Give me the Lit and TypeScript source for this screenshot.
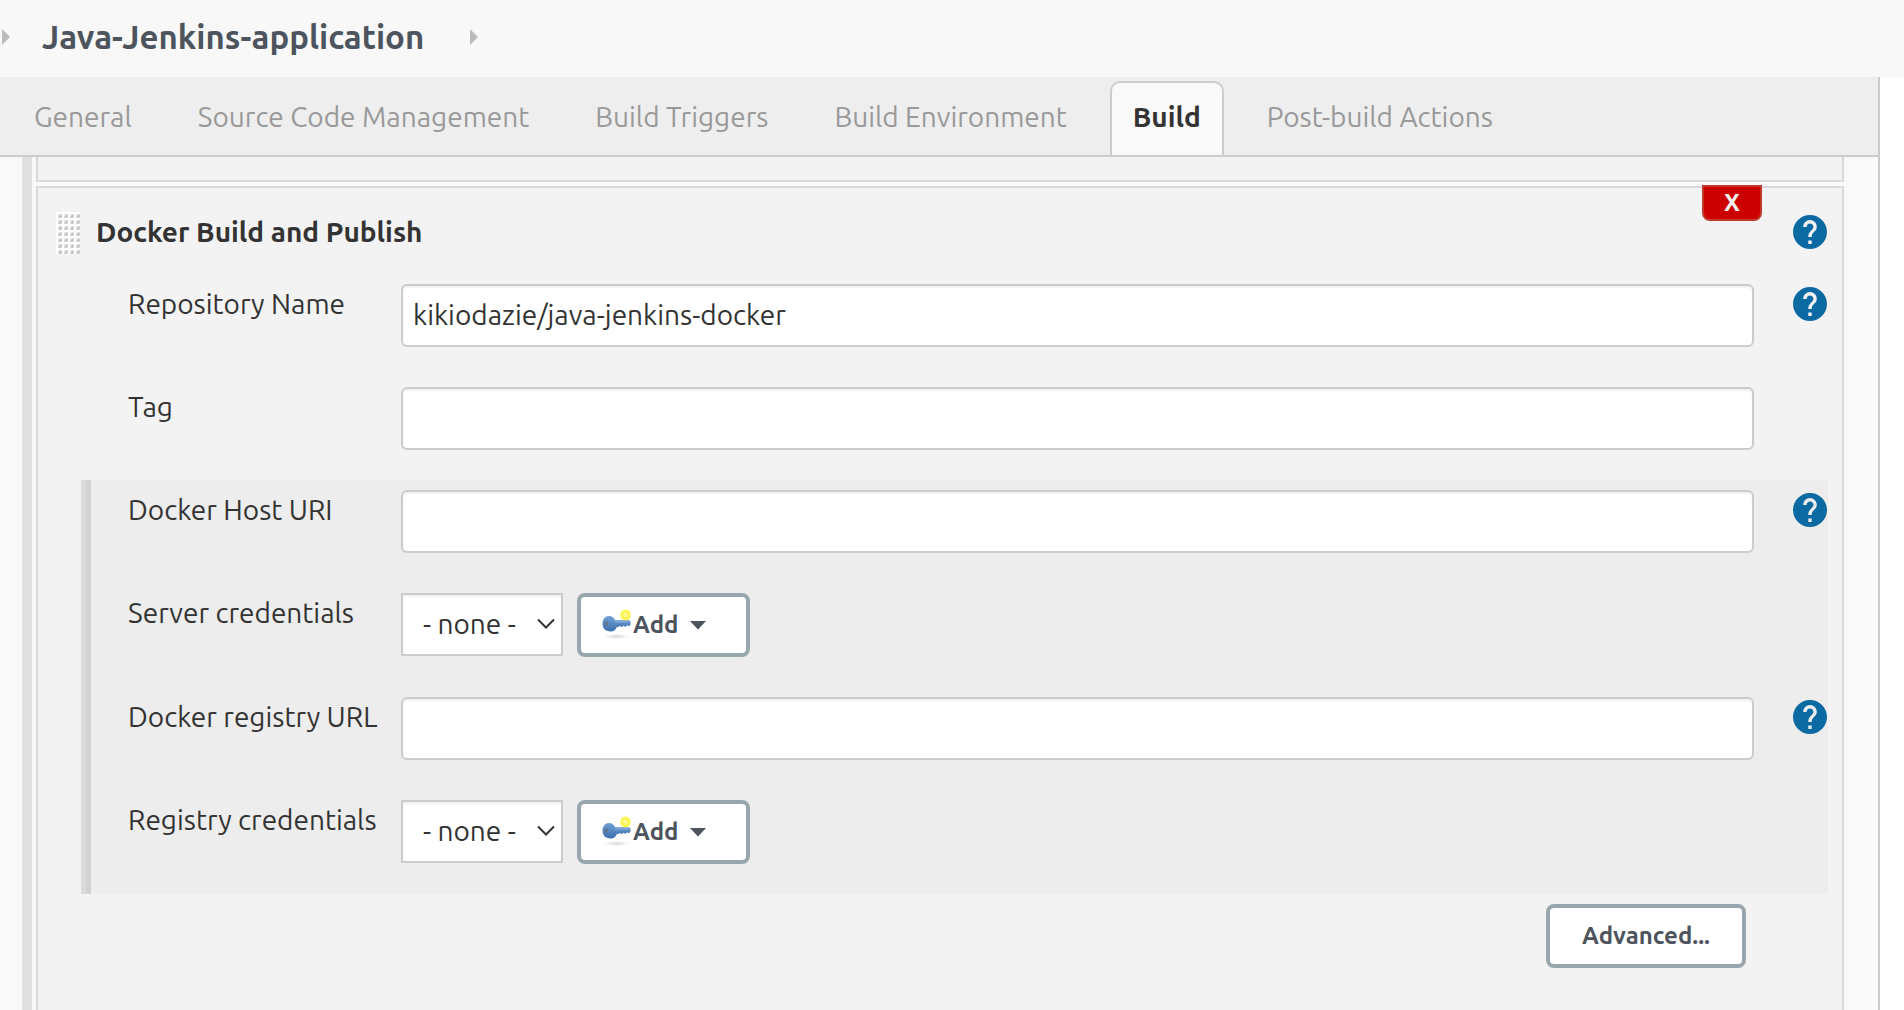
import { LitElement, html, css, svg, nothing } from "lit";
import { customElement, property } from "lit/decorators.js";

const font = css`Ubuntu, "Noto Sans", "Liberation Sans", sans-serif`;

/** Round blue help button. */
@customElement("help-button")
export class HelpButton extends LitElement {
  @property() topic = "";

  static styles = css`
    :host {
      display: block;
      width: 34px;
      height: 34px;
    }
    .help {
      display: block;
      width: 100%;
      height: 100%;
      margin: 0;
      padding: 0;
      border: 0;
      background: none;
      cursor: pointer;
    }
    .icon {
      display: block;
      fill: #0b6aa2;
    }
  `;

  render() {
    return html`<button class="help" type="button" aria-label="Help for ${this.topic}">
      <svg class="icon" width="34" height="34" viewBox="2 2 20 20">
        <path
          d="M12 2C6.48 2 2 6.48 2 12s4.48 10 10 10 10-4.48 10-10S17.52 2 12 2zm1 17h-2v-2h2v2zm2.07-7.75l-.9.92C13.45 12.9 13 13.5 13 15h-2v-.5c0-1.1.45-2.1 1.17-2.83l1.24-1.26c.37-.36.59-.86.59-1.41 0-1.1-.9-2-2-2s-2 .9-2 2H8c0-2.21 1.79-4 4-4s4 1.79 4 4c0 .88-.36 1.68-.93 2.25z"
        />
      </svg>
    </button>`;
  }
}

/** One label / control / help row of the configuration form. */
@customElement("form-row")
export class FormRow extends LitElement {
  @property() label = "";
  @property() kind: "text" | "credentials" = "text";
  @property() value = "";
  @property({ type: Boolean }) help = false;

  static styles = css`
    :host {
      display: block;
    }
    .row {
      display: grid;
      grid-template-columns: 273px minmax(0, 1fr) 34px;
      align-items: start;
      padding: 10px 0 30px;
    }
    .label {
      padding-top: 4px;
      font: 28px/32px ${font};
      color: #333;
      white-space: nowrap;
    }
    .control {
      display: flex;
      gap: 14px;
      margin-right: 39px;
    }
    .text,
    .select {
      box-sizing: border-box;
      height: 63px;
      margin: 0;
      border: 2px solid #ccc;
      background: #fff;
      box-shadow: inset 0 2px 2px rgba(0, 0, 0, 0.06);
      color: #333;
      font: 28px ${font};
      outline: none;
    }
    .text {
      width: 100%;
      padding: 0 10px 3px;
      border-radius: 6px;
    }
    .picker {
      position: relative;
    }
    .select {
      appearance: none;
      width: 162px;
      padding: 0 40px 2px 20px;
      border-radius: 0;
    }
    .chevron {
      position: absolute;
      top: 25px;
      right: 8px;
      fill: none;
      stroke: #333;
      stroke-width: 2;
      pointer-events: none;
    }
    .add {
      display: flex;
      align-items: center;
      box-sizing: border-box;
      height: 64px;
      margin: 0;
      padding: 0 40px 2px 21px;
      border: 4px solid #98a6ad;
      border-radius: 8px;
      background: #fff;
      color: #4d545d;
      font: bold 24px ${font};
      cursor: pointer;
    }
    .caret {
      margin: 2px 0 0 12px;
      fill: #4d545d;
    }
    .hint {
      margin-top: 3px;
    }
  `;

  private credentials() {
    return html`<div class="picker">
        <select class="select" id="field">
          <option>- none -</option>
        </select>
        <svg class="chevron" width="18" height="12" viewBox="0 0 18 12">
          <path d="M1 1.5L9 9.5L17 1.5" />
        </svg>
      </div>
      <button class="add" type="button">
        <svg width="31" height="30" viewBox="0 0 31 30">
          <defs>
            <linearGradient id="blue" x1="0" y1="0" x2="0" y2="1">
              <stop offset="0" stop-color="#6fa0d3" />
              <stop offset="1" stop-color="#3d6fae" />
            </linearGradient>
            <radialGradient id="shade">
              <stop offset="0" stop-color="#000" stop-opacity=".16" />
              <stop offset="1" stop-color="#000" stop-opacity="0" />
            </radialGradient>
            <radialGradient id="glow">
              <stop offset="0" stop-color="#fffcae" />
              <stop offset=".35" stop-color="#fff67a" />
              <stop offset=".75" stop-color="#fdf23c" />
              <stop offset="1" stop-color="#fff65a" stop-opacity="0" />
            </radialGradient>
          </defs>
          <ellipse cx="15" cy="27.5" rx="13" ry="2.5" fill="url(#shade)" />
          <path
            d="M7 7c3 0 5 1.700 6 4.200h14l1.500 1.500v3.300l-2 1.200-1.500-.9-1.500 1.600-2-1.200-1.800 1.500-1.800-1.200-1.700 1h-1.400c-1 2.800-3 4.500-5.800 4.500C3.100 22.500.5 19.200.5 14.800S3.100 7 7 7z"
            fill="url(#blue)"
          />
          <ellipse cx="4.2" cy="14.5" rx="1.8" ry="2.6" fill="#5b7793" />
          <path d="M13 13h14" stroke="#8fb6df" stroke-width="1" fill="none" />
          <circle cx="23.5" cy="6" r="6" fill="url(#glow)" />
        </svg>
        <span>Add</span>
        <svg class="caret" width="16" height="9" viewBox="0 0 16 9">
          <path d="M0 0H16L8 8.5z" />
        </svg>
      </button>`;
  }

  render() {
    return html`<div class="row">
      <label class="label" for="field">${this.label}</label>
      <div class="control">
        ${this.kind === "text"
          ? html`<input class="text" id="field" type="text" .value=${this.value} />`
          : this.credentials()}
      </div>
      ${this.help ? html`<help-button class="hint" topic=${this.label}></help-button>` : nothing}
    </div>`;
  }
}

const TABS = [
  "General",
  "Source Code Management",
  "Build Triggers",
  "Build Environment",
  "Build",
  "Post-build Actions",
];

@customElement("app-root")
export class AppRoot extends LitElement {
  static styles = css`
    :host {
      display: flex;
      flex-direction: column;
      min-height: 100vh;
      background: #fff;
      color: #333;
      font: 28px/32px ${font};
    }
    .crumbs {
      display: flex;
      align-items: center;
      box-sizing: border-box;
      height: 77px;
      padding: 0 2px 4px;
      background: #f8f8f8;
    }
    .arrow {
      fill: #bbb;
    }
    .title {
      margin: 0 46px 0 32px;
      color: #4d545d;
      font-size: 33px;
      font-weight: bold;
      text-decoration: none;
    }
    .page {
      display: flex;
      flex: 1;
      flex-direction: column;
      margin-right: 24px;
      border-right: 2px solid #ccc;
      background: #f9f9f9;
    }
    .tabs {
      display: flex;
      align-items: flex-end;
      gap: 20px;
      height: 78px;
      padding-left: 11px;
      border-bottom: 2px solid #ccc;
      background: #eee;
    }
    .tab {
      box-sizing: border-box;
      height: 74px;
      padding: 0 21px;
      border: 2px solid transparent;
      border-bottom: 0;
      border-radius: 10px 10px 0 0;
      color: #999;
      line-height: 68px;
      text-decoration: none;
      white-space: nowrap;
    }
    .tab.active {
      border-color: #ccc;
      background: #f9f9f9;
      color: #333;
      font-weight: bold;
    }
    .steps {
      display: flex;
      flex: 1;
      flex-direction: column;
      gap: 4px;
      margin-left: 22px;
      padding: 0 34px 0 4px;
      border-left: 10px solid #e0e0e0;
    }
    .previous {
      height: 23px;
      border: 2px solid #d9d9d9;
      border-top: 0;
      background: #f3f3f3;
    }
    .step {
      position: relative;
      flex: 1;
      padding: 24px 14px 42px 18px;
      border: 2px solid #d9d9d9;
      border-bottom: 0;
      background: #f3f3f3;
    }
    .remove {
      position: absolute;
      top: -3px;
      right: 80px;
      box-sizing: border-box;
      width: 60px;
      height: 36px;
      padding: 0;
      border: 2px solid #c0392b;
      border-radius: 0 0 8px 8px;
      background: #c00;
      color: #f1f1f1;
      font: bold 24px/30px ${font};
      cursor: pointer;
    }
    .heading {
      display: flex;
      align-items: flex-start;
      gap: 16px;
      padding: 0 1px 20px 0;
    }
    .name {
      flex: 1;
      margin: 0;
      font-size: 28px;
      line-height: 40px;
    }
    .heading-help {
      margin-top: 3px;
    }
    .rows {
      margin-left: 25px;
      padding: 0 1px 0 37px;
      border-left: 10px solid transparent;
    }
    .nested {
      border-image: linear-gradient(90deg, #dadada 5px, #d3d3d3 5px) 0 0 0 10;
      background: #ededed;
    }
    .actions {
      display: flex;
      justify-content: flex-end;
      padding: 10px 82px 0 0;
    }
    .advanced {
      box-sizing: border-box;
      height: 64px;
      padding: 0 32px 2px;
      border: 4px solid #98a6ad;
      border-radius: 8px;
      background: #fff;
      color: #4d545d;
      font: bold 24px ${font};
      cursor: pointer;
    }
  `;

  private arrow() {
    return html`<svg class="arrow" width="8" height="16" viewBox="0 0 8 16">
      <path d="M0 0L8 8L0 16z" />
    </svg>`;
  }

  private grip() {
    const cells = Array.from({ length: 28 }, (_, i) => [(i % 4) * 6, Math.floor(i / 4) * 6]);
    return html`<svg width="24" height="42" viewBox="0 0 24 42">
      <rect width="24" height="42" fill="#fdfdfd" />
      ${cells.map(
        ([x, y]) => svg`<rect x=${x + 2} y=${y + 2} width="4" height="4" rx="1" fill="#e2e2e2" />
          <path d="M${x + 5.5} ${y + 2}V${y + 5.5}H${x + 2}z" fill="#bdbdbd" />`,
      )}
    </svg>`;
  }

  render() {
    return html`
      <nav class="crumbs" aria-label="Breadcrumb">
        ${this.arrow()}
        <a class="title" href="#project">Java-Jenkins-application</a>
        ${this.arrow()}
      </nav>
      <main class="page">
        <nav class="tabs" aria-label="Sections">
          ${TABS.map(
            (tab) => html`<a
              class=${tab === "Build" ? "tab active" : "tab"}
              href="#${tab.toLowerCase().replaceAll(" ", "-")}"
              >${tab}</a
            >`,
          )}
        </nav>
        <form class="steps">
          <div class="previous"></div>
          <section class="step">
            <button class="remove" type="button">X</button>
            <header class="heading">
              ${this.grip()}
              <h2 class="name">Docker Build and Publish</h2>
              <help-button class="heading-help" topic="Docker Build and Publish"></help-button>
            </header>
            <div class="rows">
              <form-row label="Repository Name" value="kikiodazie/java-jenkins-docker" help></form-row>
              <form-row label="Tag"></form-row>
            </div>
            <div class="rows nested">
              <form-row label="Docker Host URI" help></form-row>
              <form-row label="Server credentials" kind="credentials"></form-row>
              <form-row label="Docker registry URL" help></form-row>
              <form-row label="Registry credentials" kind="credentials"></form-row>
            </div>
            <div class="actions">
              <button class="advanced" type="button">Advanced...</button>
            </div>
          </section>
        </form>
      </main>
    `;
  }
}
